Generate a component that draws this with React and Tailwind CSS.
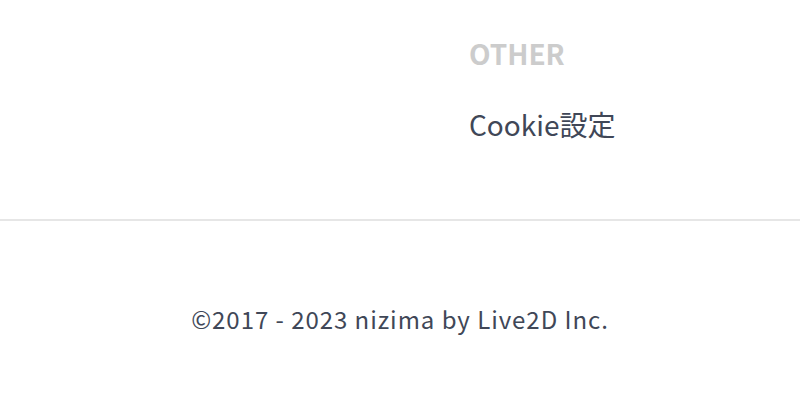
export default function App() {
  return (
    <div
      className="bg-white w-[800px] h-[416px] overflow-hidden text-[#404757]"
      style={{ fontFamily: '"Noto Sans CJK JP", "Noto Sans", sans-serif' }}
    >
      <div className="flex h-[219px]">
        <div className="flex-1" />
        <div className="w-[331px] pt-[35px]">
          <h3 className="text-[28px] font-bold leading-[36px] text-[#cccccc]">OTHER</h3>
          <ul className="mt-[33px]">
            <li>
              <a href="#" className="text-[28px] leading-[40px]">
                Cookie設定
              </a>
            </li>
          </ul>
        </div>
      </div>
      <div className="border-t-2 border-[#e6e6e6]">
        <p className="text-center text-[24px] leading-[32px] pt-[82px] tracking-[0.04em]">
          ©2017 - 2023 nizima by Live2D Inc.
        </p>
      </div>
    </div>
  );
}
